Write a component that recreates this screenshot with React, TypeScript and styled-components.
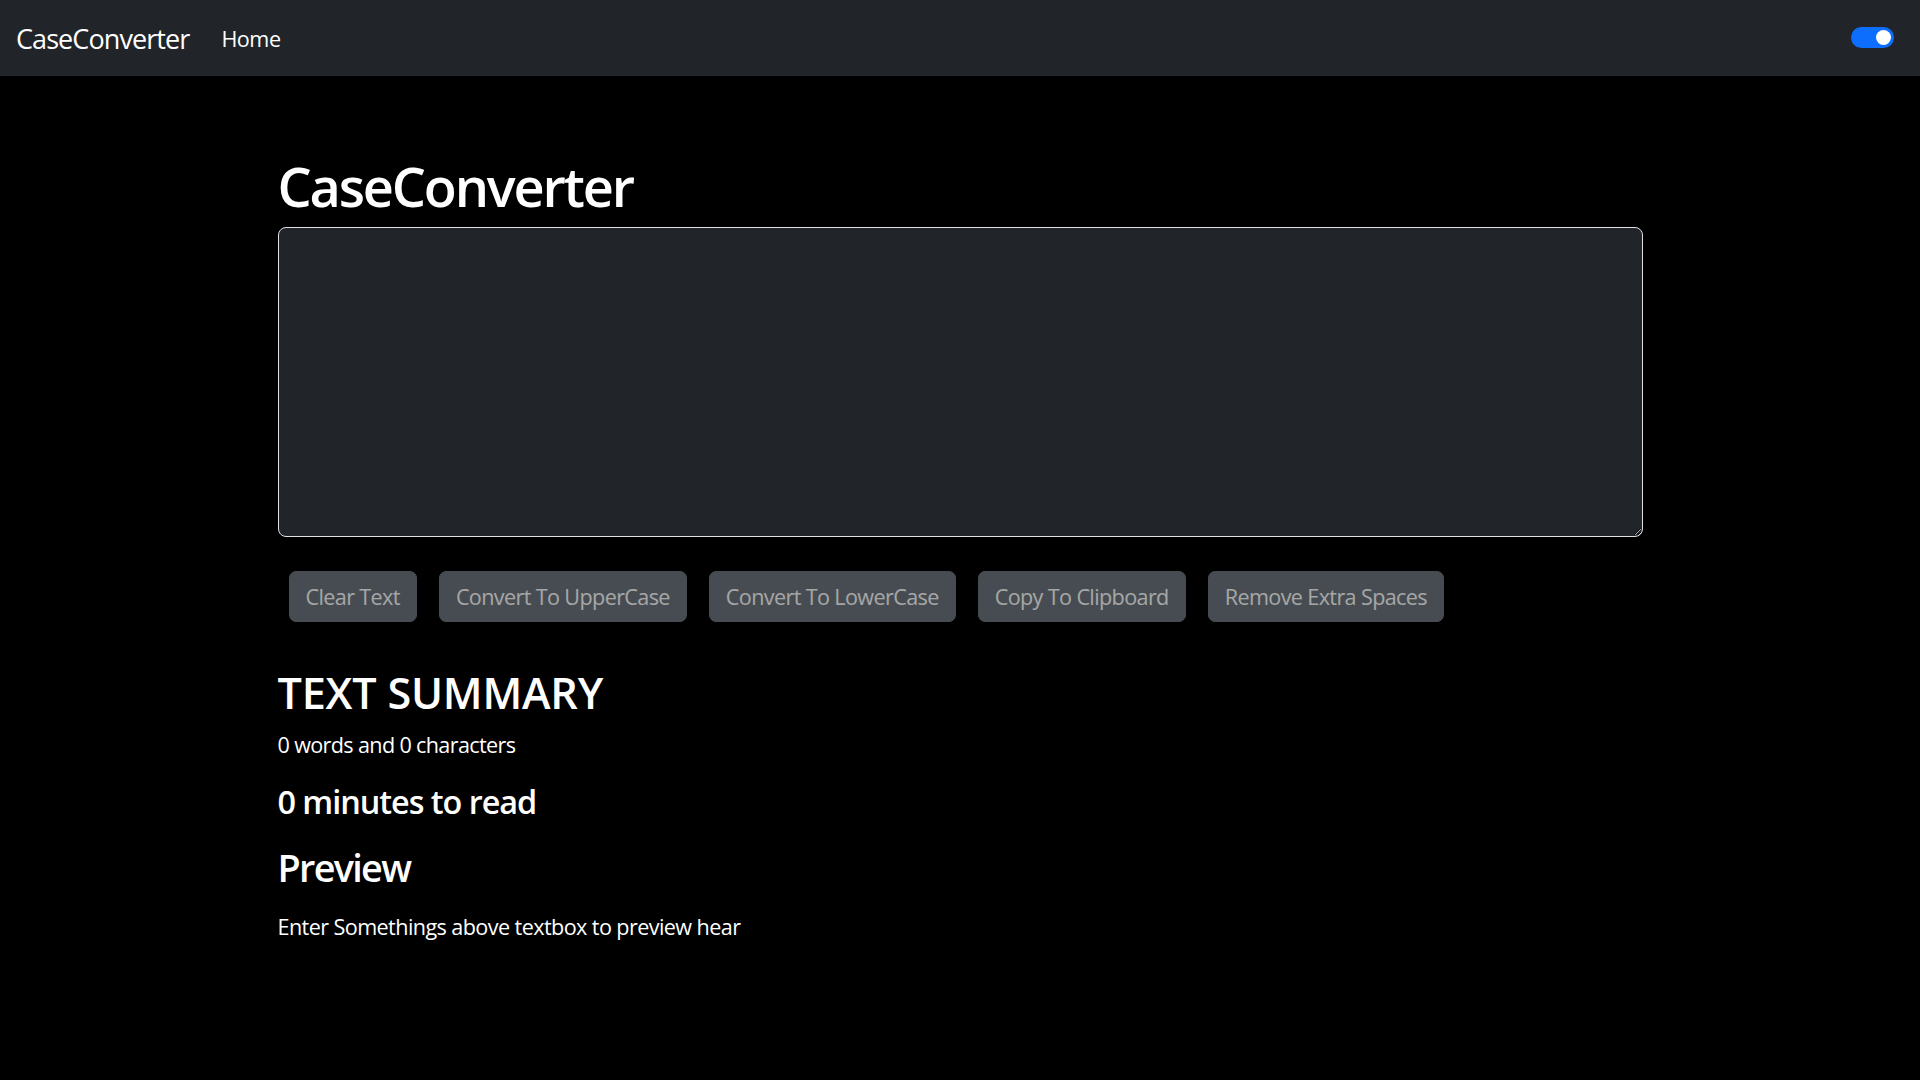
import React from "react";
import styled, { createGlobalStyle } from "styled-components";

const GlobalStyle = createGlobalStyle`
  html, body {
    margin: 0;
    padding: 0;
    background: #000000;
  }
  body {
    font-family: "Open Sans", "Noto Sans", "Liberation Sans", sans-serif;
    color: #ffffff;
    letter-spacing: -0.03em;
  }
  * { box-sizing: border-box; }
`;

const NavBar = styled.nav`
  height: 76px;
  background: #212529;
  display: flex;
  align-items: center;
  padding: 2px 26px 0 16px;
`;

const Brand = styled.a`
  font-size: 27px;
  line-height: 40px;
  letter-spacing: -0.034em;
  color: #ffffff;
  text-decoration: none;
  margin-right: 32px;
`;

const NavLink = styled.a`
  font-size: 21.6px;
  line-height: 32px;
  color: #ffffff;
  text-decoration: none;
`;

const Spacer = styled.div`
  flex: 1;
`;

const Switch = styled.span<{ $on: boolean }>`
  position: relative;
  display: inline-block;
  width: 43px;
  height: 21px;
  border-radius: 11px;
  background: ${(p) => (p.$on ? "#0d6efd" : "#212529")};
  margin-top: -4px;
  &::after {
    content: "";
    position: absolute;
    top: 3px;
    left: ${(p) => (p.$on ? "25px" : "3px")};
    width: 15px;
    height: 15px;
    border-radius: 50%;
    background: #ffffff;
  }
`;

const Container = styled.main`
  width: 1365px;
  margin: 0 auto;
  padding-top: 78px;
  display: flex;
  flex-direction: column;
`;

const Title = styled.h1`
  font-size: 54px;
  line-height: 64.8px;
  font-weight: 600;
  margin: 0 0 8.6px;
  letter-spacing: -0.04em;
`;

const TextArea = styled.textarea`
  width: 100%;
  height: 310px;
  background: #212529;
  border: 1px solid #dee2e6;
  border-radius: 8px;
  color: #ffffff;
  font-family: inherit;
  font-size: 21.6px;
  padding: 8px 16px;
  color-scheme: dark;
  outline: none;
`;

const ButtonRow = styled.div`
  display: flex;
  flex-wrap: wrap;
  margin-top: 34px;
`;

const ActionButton = styled.button`
  margin: 0 11px;
  padding: 8px 16px;
  font-family: inherit;
  font-size: 21.6px;
  line-height: 33px;
  letter-spacing: -0.029em;
  color: #ffffff;
  background: #6c757d;
  border: 1px solid #6c757d;
  border-radius: 7px;
  opacity: 0.65;
  cursor: default;
`;

const SummaryHeading = styled.h2`
  font-size: 43.2px;
  line-height: 51.84px;
  font-weight: 600;
  margin: 44.3px 0 10.2px;
  letter-spacing: -0.005em;
`;

const StatLine = styled.p`
  font-size: 21.6px;
  line-height: 32.4px;
  margin: 0 0 21.2px;
  letter-spacing: -0.03em;
`;

const ReadTime = styled.h4`
  font-size: 32.4px;
  line-height: 38.88px;
  font-weight: 600;
  margin: 0 0 23.75px;
  letter-spacing: -0.032em;
`;

const PreviewHeading = styled.h3`
  font-size: 37.8px;
  line-height: 45.36px;
  font-weight: 600;
  margin: 0 0 20.4px;
  letter-spacing: -0.045em;
`;

const PreviewText = styled.p`
  font-size: 21.6px;
  line-height: 32.4px;
  margin: 0;
  letter-spacing: -0.027em;
`;

const buttons = [
  "Clear Text",
  "Convert To UpperCase",
  "Convert To LowerCase",
  "Copy To Clipboard",
  "Remove Extra Spaces",
];

export default function App() {
  return (
    <>
      <GlobalStyle />
      <NavBar>
        <Brand href="#">CaseConverter</Brand>
        <NavLink href="#">Home</NavLink>
        <Spacer />
        <Switch $on={true} />
      </NavBar>
      <Container>
        <Title>CaseConverter</Title>
        <TextArea defaultValue="" />
        <ButtonRow>
          {buttons.map((b) => (
            <ActionButton key={b} disabled>
              {b}
            </ActionButton>
          ))}
        </ButtonRow>
        <SummaryHeading>TEXT SUMMARY</SummaryHeading>
        <StatLine>0 words and 0 characters</StatLine>
        <ReadTime>0 minutes to read</ReadTime>
        <PreviewHeading>Preview</PreviewHeading>
        <PreviewText>Enter Somethings above textbox to preview hear</PreviewText>
      </Container>
    </>
  );
}
